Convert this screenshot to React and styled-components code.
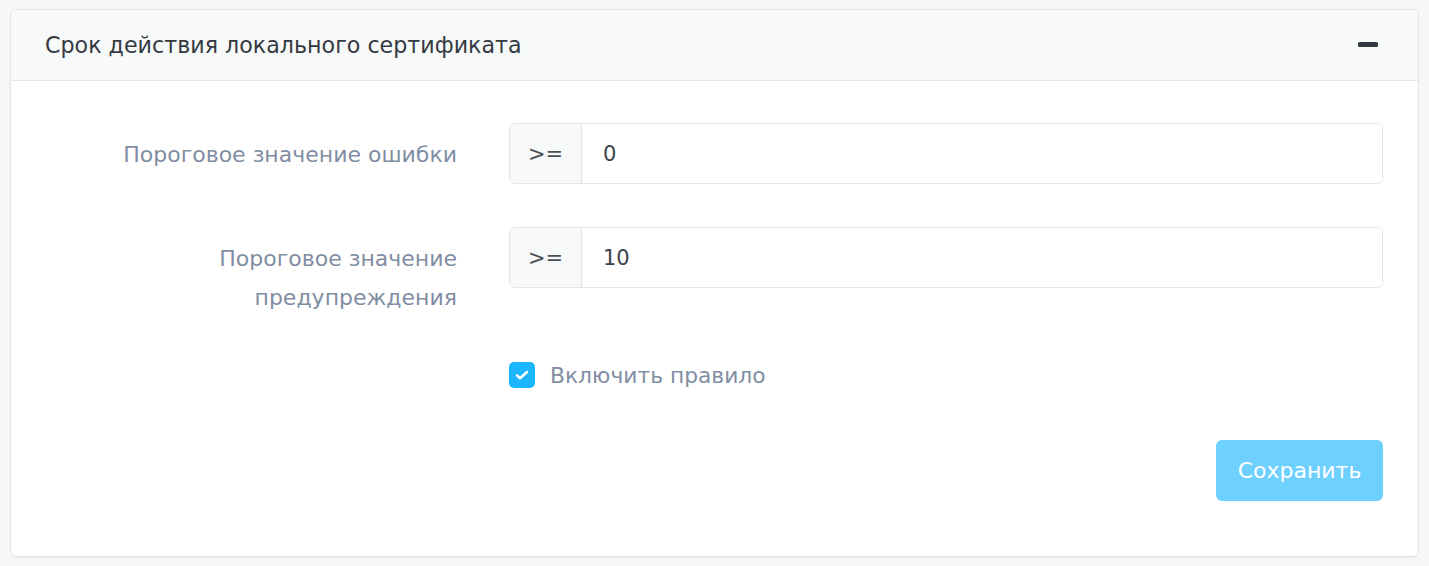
import React from "react";
import styled, { createGlobalStyle } from "styled-components";

const Global = createGlobalStyle`
  html, body { margin: 0; padding: 0; background: #f6f7f9; }
  body { font-family: "DejaVu Sans", Inter, "Liberation Sans", Arial, sans-serif; }
  * { box-sizing: border-box; }
`;

const Page = styled.div`
  padding: 9px 10px 9px 10px;
`;

const Card = styled.section`
  background: #fff;
  border: 1.5px solid #e2e5ea;
  border-radius: 6px;
  box-shadow: 0 1px 2px rgba(0,0,0,0.04);
  overflow: hidden;
  height: 548px;
`;

const Header = styled.header`
  height: 71px;
  background: #f8f9f9;
  border-bottom: 1.5px solid #e3e6ea;
  display: flex;
  align-items: center;
  justify-content: space-between;
  padding: 0 40px 0 34px;
`;

const Title = styled.h2`
  margin: 0;
  font-size: 22.2px;
  font-weight: 400;
  color: #343a42;
`;

const Minus = styled.span`
  width: 20px;
  height: 5px;
  border-radius: 1.5px;
  background: #343a42;
  margin-top: -2px;
`;

const Body = styled.div`
  padding: 42px 35px 0 34px;
`;

const Row = styled.div`
  display: grid;
  grid-template-columns: 412px 1fr;
  column-gap: 52px;
  align-items: start;
  margin-bottom: ${p => p.$mb || 43}px;
`;

const Label = styled.label`
  text-align: right;
  color: #7f8ea3;
  font-size: 22px;
  line-height: 39px;
  padding-top: 12px;
`;

const InputGroup = styled.div`
  display: flex;
  height: 61px;
  border: 1.5px solid #e2e5ea;
  border-radius: 6px;
  overflow: hidden;
`;

const Addon = styled.span`
  width: 72px;
  background: #f7f8f8;
  border-right: 1.5px solid #e2e5ea;
  display: flex;
  align-items: center;
  justify-content: center;
  font-size: 21px;
  color: #4a5058;
`;

const Field = styled.input`
  flex: 1;
  border: none;
  outline: none;
  padding: 0 21px;
  font-family: inherit;
  font-size: 21px;
  color: #3d434b;
  background: #fff;
`;

const CheckRow = styled.label`
  display: flex;
  align-items: center;
  gap: 15px;
  color: #7f8ea3;
  font-size: 21.8px;
  margin-top: 15px;
`;

const Box = styled.span`
  width: 26px;
  height: 26px;
  border-radius: 5px;
  background: #1cb6ff;
  display: flex;
  align-items: center;
  justify-content: center;
`;

const Footer = styled.div`
  display: flex;
  justify-content: flex-end;
  margin-top: 52px;
`;

const Button = styled.button`
  width: 167px;
  height: 61px;
  border: none;
  border-radius: 6px;
  background: #6dd0ff;
  color: #fff;
  font-family: inherit;
  font-size: 22px;
  cursor: pointer;
`;

export default function App() {
  return (
    <>
      <Global />
      <Page>
        <Card>
          <Header>
            <Title>Срок действия локального сертификата</Title>
            <Minus />
          </Header>
          <Body>
            <Row>
              <Label>Пороговое значение ошибки</Label>
              <InputGroup>
                <Addon>&gt;=</Addon>
                <Field defaultValue="0" />
              </InputGroup>
            </Row>
            <Row $mb={30}>
              <Label>Пороговое значение<br />предупреждения</Label>
              <InputGroup>
                <Addon>&gt;=</Addon>
                <Field defaultValue="10" />
              </InputGroup>
            </Row>
            <Row $mb={0}>
              <span />
              <CheckRow>
                <Box>
                  <svg width="16" height="16" viewBox="0 0 16 16">
                    <path d="M3 8.4l3 2.9L13 5" fill="none" stroke="#fff" strokeWidth="2.6" strokeLinecap="round" strokeLinejoin="round" />
                  </svg>
                </Box>
                Включить правило
              </CheckRow>
            </Row>
            <Footer>
              <Button>Сохранить</Button>
            </Footer>
          </Body>
        </Card>
      </Page>
    </>
  );
}
